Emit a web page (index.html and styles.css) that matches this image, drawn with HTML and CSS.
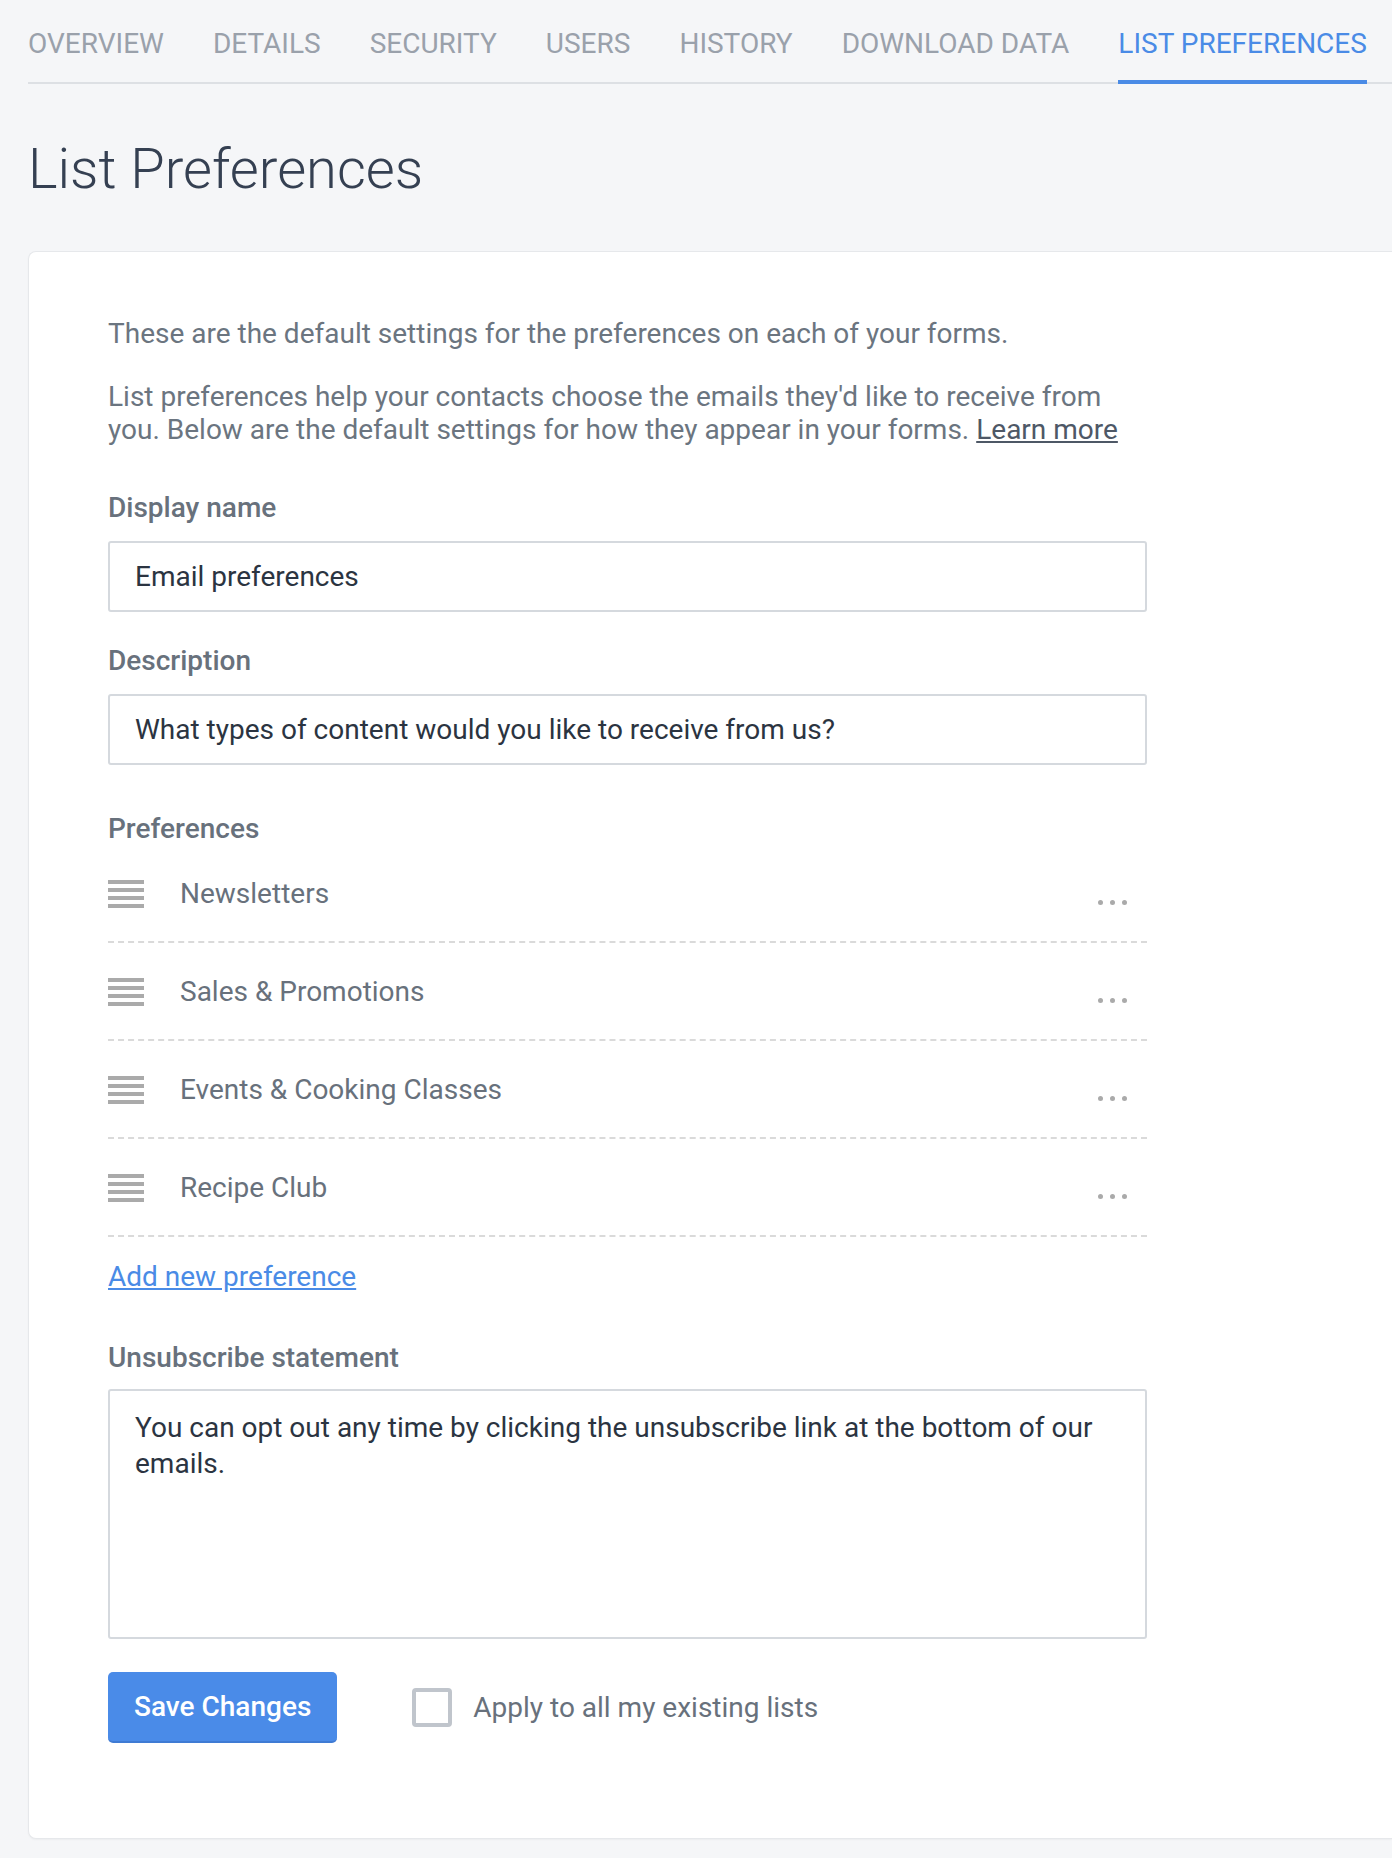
FILE: index.html
```html
<!DOCTYPE html>
<html lang="en">
<head>
    <meta charset="UTF-8">
    <meta name="viewport" content="width=device-width, initial-scale=1.0">
    <title>List Preferences</title>
    <link rel="stylesheet" href="styles.css">
</head>
<body>

<div class="page">
    <nav class="tabs">
        <a class="tab" href="#">Overview</a>
        <a class="tab" href="#">Details</a>
        <a class="tab" href="#">Security</a>
        <a class="tab" href="#">Users</a>
        <a class="tab" href="#">History</a>
        <a class="tab" href="#">Download Data</a>
        <a class="tab active" href="#">List Preferences</a>
    </nav>

    <h1>List Preferences</h1>

    <div class="card">
        <p class="intro">These are the default settings for the preferences on each of your forms.</p>
        <p class="intro">List preferences help your contacts choose the emails they'd like to receive from you. Below are the default settings for how they appear in your forms. <a class="learn" href="#">Learn more</a></p>

        <label class="field-label" for="displayName">Display name</label>
        <input class="text-input" type="text" id="displayName" value="Email preferences">

        <label class="field-label" for="description">Description</label>
        <input class="text-input" type="text" id="description" value="What types of content would you like to receive from us?">

        <div class="field-label prefs-label">Preferences</div>
        <ul class="pref-list">
            <li class="pref">
                <span class="drag"><i></i><i></i><i></i><i></i></span>
                <span class="pref-name">Newsletters</span>
                <span class="more"><i></i><i></i><i></i></span>
            </li>
            <li class="pref">
                <span class="drag"><i></i><i></i><i></i><i></i></span>
                <span class="pref-name">Sales &amp; Promotions</span>
                <span class="more"><i></i><i></i><i></i></span>
            </li>
            <li class="pref">
                <span class="drag"><i></i><i></i><i></i><i></i></span>
                <span class="pref-name">Events &amp; Cooking Classes</span>
                <span class="more"><i></i><i></i><i></i></span>
            </li>
            <li class="pref">
                <span class="drag"><i></i><i></i><i></i><i></i></span>
                <span class="pref-name">Recipe Club</span>
                <span class="more"><i></i><i></i><i></i></span>
            </li>
        </ul>
        <a class="add-link" href="#">Add new preference</a>

        <label class="field-label unsub-label" for="unsubscribe">Unsubscribe statement</label>
        <textarea class="text-area" id="unsubscribe" rows="5">You can opt out any time by clicking the unsubscribe link at the bottom of our emails.</textarea>

        <div class="actions">
            <button class="save-btn">Save Changes</button>
            <label class="apply">
                <input type="checkbox">
                <span class="box"></span>
                Apply to all my existing lists
            </label>
        </div>
    </div>
</div>

</body>
</html>
```

FILE: styles.css
```css
body {
    margin: 0;
    font-family: Roboto, "Liberation Sans", Arial, sans-serif;
    background-color: #f5f6f8;
    color: #6b7580;
    overflow-x: hidden;
}
.page {
    padding: 0 0 21px 28px;
}
.tabs {
    display: flex;
    gap: 49px;
    padding-top: 27px;
    border-bottom: 2px solid #dde0e4;
}
.tab {
    font-size: 28px;
    line-height: 33px;
    text-transform: uppercase;
    text-decoration: none;
    color: #9aa1ab;
    padding-bottom: 20px;
    border-bottom: 4px solid transparent;
    margin-bottom: -2px;
}
.tab.active {
    color: #4a8be6;
    border-bottom-color: #4a8be6;
}
h1 {
    margin: 0;
    padding: 52px 0 49px;
    font-size: 56px;
    line-height: 66px;
    font-weight: 300;
    color: #354052;
}
.card {
    background-color: #ffffff;
    border: 1px solid #e6e8eb;
    border-right: none;
    border-radius: 8px 0 0 8px;
    box-shadow: 0 1px 2px rgba(0, 0, 0, 0.04);
    padding: 65px 0 95px 79px;
    font-size: 28px;
    line-height: 32px;
}
.intro {
    margin: 0 0 30px;
    max-width: 1030px;
    line-height: 33px;
}
.learn {
    color: #4e5866;
}
.field-label {
    display: block;
    margin: 48px 0 17px;
    font-weight: 500;
    color: #68717c;
}
.intro + .field-label {
    margin-top: 46px;
}
.text-input {
    display: block;
    box-sizing: border-box;
    width: 1039px;
    height: 71px;
    padding: 0 25px;
    border: 2px solid #d5d9de;
    border-radius: 3px;
    font-family: inherit;
    font-size: 28px;
    color: #2b3441;
}
#displayName {
    margin-bottom: 33px;
}
#displayName + .field-label {
    margin-top: 0;
}
.prefs-label {
    margin-bottom: 0;
}
.pref-list {
    list-style: none;
    margin: 0;
    padding: 0;
    width: 1039px;
}
.pref {
    display: flex;
    align-items: center;
    padding: 33px 0 31px;
    border-bottom: 2px dashed #dadada;
}
.drag {
    display: flex;
    flex-direction: column;
    gap: 4px;
    width: 36px;
    margin-right: 36px;
}
.drag i {
    display: block;
    height: 4px;
    background-color: #aaaaaa;
}
.pref-name {
    flex: 1;
    color: #68717c;
}
.more {
    display: flex;
    gap: 7px;
    padding-top: 17px;
    margin-right: 20px;
}
.more i {
    display: block;
    width: 5px;
    height: 5px;
    border-radius: 50%;
    background-color: #aaaaaa;
}
.add-link {
    display: inline-block;
    margin-top: 24px;
    color: #4a8be6;
}
.unsub-label {
    margin-top: 49px;
    margin-bottom: 15px;
}
.text-area {
    display: block;
    box-sizing: border-box;
    width: 1039px;
    height: 250px;
    padding: 19px 25px;
    border: 2px solid #d5d9de;
    border-radius: 3px;
    font-family: inherit;
    font-size: 28px;
    line-height: 36px;
    color: #2b3441;
    resize: none;
}
.actions {
    display: flex;
    align-items: center;
    margin-top: 33px;
}
.save-btn {
    height: 71px;
    padding: 0 26px;
    border: none;
    border-bottom: 2px solid #3f7bd4;
    border-radius: 5px;
    background-color: #4a8be8;
    color: #ffffff;
    font-family: inherit;
    font-size: 28px;
    font-weight: 500;
    cursor: pointer;
}
.apply {
    display: flex;
    align-items: center;
    margin-left: 75px;
    color: #68717c;
    cursor: pointer;
}
.apply input {
    display: none;
}
.box {
    box-sizing: border-box;
    width: 40px;
    height: 39px;
    border: 4px solid #c0c5cc;
    border-radius: 4px;
    margin-right: 21px;
}
```
